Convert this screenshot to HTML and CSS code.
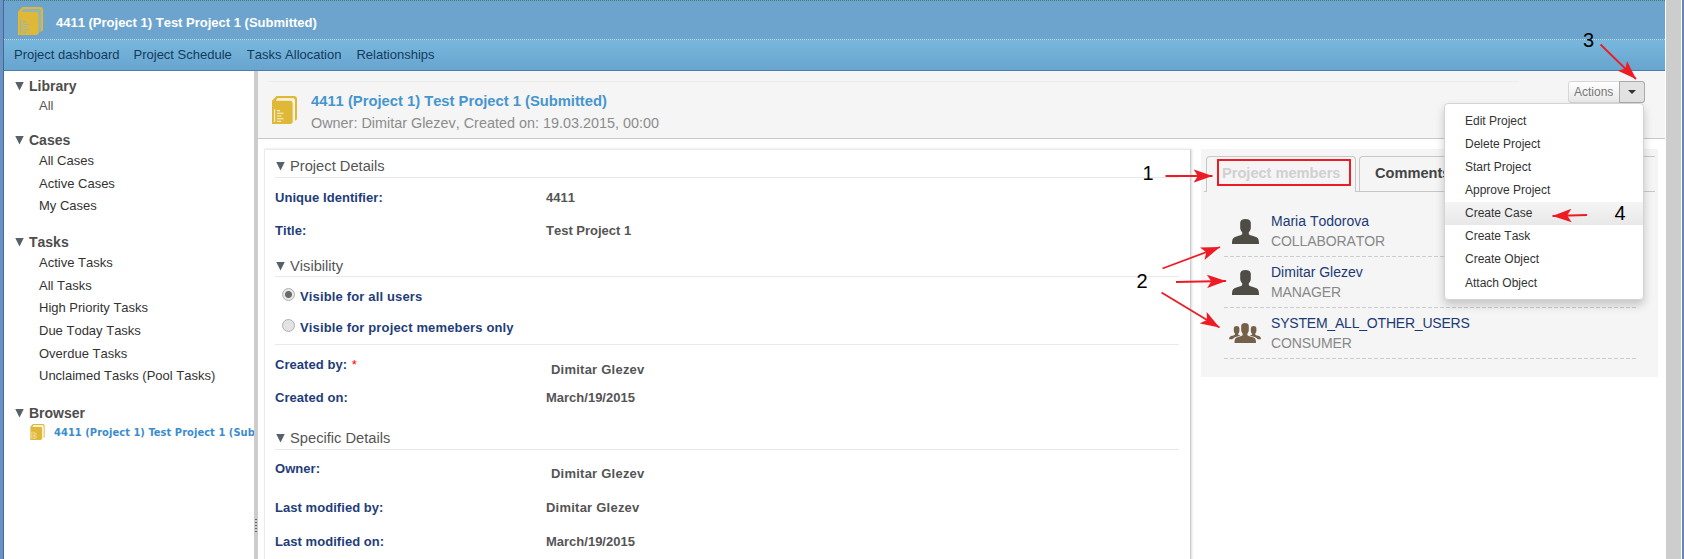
FILE: index.html
```html
<!DOCTYPE html>
<html lang="en">
<head>
<meta charset="utf-8">
<title>4411 (Project 1) Test Project 1 (Submitted)</title>
<link rel="stylesheet" href="styles.css">
</head>
<body>
<svg class="defs" width="0" height="0">
  <symbol id="book" viewBox="0 0 25 28">
    <path fill="#e0b838" d="M0 4.800 L4.400 0 H22 Q25 0 25 3 V22.500 Q25 24.400 23 24.800 V4.800 Q23 2.300 20.500 2.300 H5.800 L4 4.600 H17.800 Q20.800 4.600 20.800 7.600 V25 Q20.800 28 17.800 28 H0 Z"/>
    <path fill="currentColor" d="M4 4.600 L5.800 2.300 H20.500 Q23 2.300 23 4.800 V24.800 H20.800 V7.600 Q20.800 4.600 17.800 4.600 Z"/>
    <path stroke="currentColor" fill="none" stroke-width="1.1" d="M2.600 13V26M5 14.600H8M5 17.300H11.500M5 20H9.500M5 22.700H11.500M5 25.200H9"/>
  </symbol>
  <symbol id="person" viewBox="0 0 27 25">
    <path fill="#4f4c46" d="M8.200 3.500 C8.600 1 10.500 0 13.500 0 C16.500 0 18.400 1 18.800 3.500 V9.200 C18.600 11 17.800 12.200 16.800 13.200 V15.200 C18.500 16.600 22 17 24.600 18.200 C26.500 19.200 27 21 27 25 H0 C0 21 .5 19.200 2.400 18.200 C5 17 8.500 16.600 10.200 15.200 V13.200 C9.200 12.200 8.400 11 8.200 9.200 Z"/>
  </symbol>
  <symbol id="group" viewBox="0 0 32 20">
    <g fill="#75614a">
      <path d="M12.200 2.800 C12.400 .8 13.800 0 16 0 C18.200 0 19.600 .8 19.800 2.800 V7 C19.700 8.600 19.200 9.700 18.400 10.500 V12.200 C19.800 13.400 22.600 13.700 24.600 14.600 C26.500 15.500 27 16.800 27 20 H5.500 C5.500 16.800 6 15.500 7.600 14.600 C9.600 13.700 12.200 13.400 13.600 12.200 V10.500 C12.800 9.700 12.300 8.600 12.200 7 Z"/>
      <path d="M4.800 5 Q5 3 7.500 3 Q10.200 3 10.400 5 V8 Q10.300 9.700 9.300 10.600 V11.800 L11.500 12.800 Q6.500 13.600 5 14.800 L3.400 16.300 H0 Q0 13.800 2 13 Q5 12.500 6 11.500 V10.600 Q4.900 9.700 4.800 8 Z"/>
      <path d="M27.400 5 Q27.200 3 24.700 3 Q22 3 21.800 5 V8 Q21.900 9.700 22.900 10.600 V11.800 L20.700 12.800 Q25.700 13.600 27.200 14.800 L28.800 16.300 H32 Q32 13.800 30.200 13 Q27.200 12.500 26.200 11.500 V10.600 Q27.300 9.700 27.400 8 Z"/>
    </g>
  </symbol>
</svg>

<div class="window">
  <div class="app">
    <header class="topbar">
      <svg class="book book-top"><use href="#book"/></svg>
      <span>4411 (Project 1) Test Project 1 (Submitted)</span>
    </header>
    <nav class="nav">
      <a>Project dashboard</a><a>Project Schedule</a><a>Tasks Allocation</a><a>Relationships</a>
    </nav>
    <div class="body">
      <aside class="sidebar">
        <section class="group library">
          <h3><i class="tri"></i>Library</h3>
          <ul><li>All</li></ul>
        </section>
        <section class="group cases">
          <h3><i class="tri"></i>Cases</h3>
          <ul><li>All Cases</li><li>Active Cases</li><li>My Cases</li></ul>
        </section>
        <section class="group tasks">
          <h3><i class="tri"></i>Tasks</h3>
          <ul><li>Active Tasks</li><li>All Tasks</li><li>High Priority Tasks</li><li>Due Today Tasks</li><li>Overdue Tasks</li><li>Unclaimed Tasks (Pool Tasks)</li></ul>
        </section>
        <section class="group">
          <h3><i class="tri"></i>Browser</h3>
          <div class="tree"><svg class="book book-small"><use href="#book"/></svg><span>4411 (Project 1) Test Project 1 (Sub</span></div>
        </section>
      </aside>
      <div class="splitter"><i></i></div>
      <main class="main">
        <header class="head">
          <svg class="book"><use href="#book"/></svg>
          <div class="head-text">
            <h1>4411 (Project 1) Test Project 1 (Submitted)</h1>
            <p>Owner: Dimitar Glezev, Created on: 19.03.2015, 00:00</p>
          </div>
          <div class="actions">
            <div class="split-button"><span>Actions</span><b><i></i></b></div>
            <ul class="menu">
              <li>Edit Project</li><li>Delete Project</li><li>Start Project</li><li>Approve Project</li>
              <li class="active">Create Case</li><li>Create Task</li><li>Create Object</li><li>Attach Object</li>
            </ul>
          </div>
        </header>
        <div class="columns">
          <div class="card">
            <h2><i class="tri"></i>Project Details</h2>
            <dl class="row r33 first"><dt>Unique Identifier:</dt><dd>4411</dd></dl>
            <dl class="row r33"><dt>Title:</dt><dd>Test Project 1</dd></dl>
            <h2 class="visibility"><i class="tri"></i>Visibility</h2>
            <div class="options">
              <label><i class="radio on"></i>Visible for all users</label>
              <label><i class="radio"></i>Visible for project memebers only</label>
            </div>
            <dl class="row r33 created"><dt>Created by: <em>*</em></dt><dd class="name picked">Dimitar Glezev</dd></dl>
            <dl class="row r33"><dt>Created on:</dt><dd>March/19/2015</dd></dl>
            <h2 class="specific"><i class="tri"></i>Specific Details</h2>
            <dl class="row r39"><dt>Owner:</dt><dd class="name picked">Dimitar Glezev</dd></dl>
            <dl class="row r34"><dt>Last modified by:</dt><dd class="name">Dimitar Glezev</dd></dl>
            <dl class="row r34"><dt>Last modified on:</dt><dd>March/19/2015</dd></dl>
          </div>
          <div class="panel">
            <div class="tabs">
              <div class="tab current"><span>Project members</span></div>
              <div class="tab other">Comments</div>
            </div>
            <ul class="members">
              <li><svg class="person"><use href="#person"/></svg><div><b>Maria Todorova</b><span>COLLABORATOR</span></div></li>
              <li><svg class="person"><use href="#person"/></svg><div><b>Dimitar Glezev</b><span>MANAGER</span></div></li>
              <li><svg class="people"><use href="#group"/></svg><div><b class="system">SYSTEM_ALL_OTHER_USERS</b><span>CONSUMER</span></div></li>
            </ul>
          </div>
        </div>
      </main>
    </div>
  </div>
  <div class="scroll"></div>
</div>

<svg class="notes" width="1684" height="559" viewBox="0 0 1684 559">
  <defs>
    <marker id="arrow" markerUnits="userSpaceOnUse" markerWidth="20" markerHeight="14" refX="19" refY="7" orient="auto">
      <path d="M0 .3 L19 7 L0 13.700 L4.300 7 Z" fill="#ed1c24"/>
    </marker>
  </defs>
  <g stroke="#ed1c24" stroke-width="1.8" fill="none">
    <path d="M1165.500 176H1212.500" marker-end="url(#arrow)"/>
    <path d="M1162.500 268.500L1220 247" marker-end="url(#arrow)"/>
    <path d="M1176 282L1226 281" marker-end="url(#arrow)"/>
    <path d="M1161.500 292.500L1219.500 327.500" marker-end="url(#arrow)"/>
    <path d="M1600.500 44.500L1636 79" marker-end="url(#arrow)"/>
    <path d="M1587 215L1552.500 216" marker-end="url(#arrow)"/>
  </g>
  <g class="numbers">
    <text x="1142.500" y="180">1</text>
    <text x="1136.500" y="288">2</text>
    <text x="1583" y="46.500">3</text>
    <text x="1614.500" y="220">4</text>
  </g>
</svg>
</body>
</html>
```
FILE: styles.css
```css
* { box-sizing: border-box; }
body, h1, h2, h3, p, ul, dl, dd { margin: 0; padding: 0; }
ul { list-style: none; }
body {
  width: 1684px; height: 559px; overflow: hidden; background: #fff;
  font: 13px "Liberation Sans", Arial, sans-serif; font-kerning: none;
  color: #333; white-space: nowrap;
}
.defs { position: absolute; }
.window {
  display: flex; height: 559px;
  border-left: 3px solid #6a93c4; border-right: 2px solid #6288b6;
}
.app {
  width: 1662px; flex: none; display: flex; flex-direction: column;
  border-left: 1px solid #3f6b9a;
}
.scroll { flex: 1; margin: 0 1px; background: #cdcdcd; }

/* Title bar and navigation */
.topbar {
  height: 40px; flex: none; display: flex; align-items: center; padding-left: 14px;
  background: #6da4ce; border-top: 1px dotted #3f8468; border-bottom: 1px dotted #c3ddf0;
  color: #fff; font-weight: bold;
}
.topbar span { padding: 5px 0 0 13px; }
.nav {
  height: 31px; flex: none; display: flex; gap: 15px; padding-left: 10px; line-height: 29px;
  background: linear-gradient(#77b7dd, #69a5cf); border-bottom: 1px solid #4680ae; color: #123b5c;
}
.nav a:first-child { margin-right: -1px; }
.book { width: 25px; height: 28px; flex: none; color: #f8f1dc; }
.book-top { color: #8fb4c4; margin-top: 2px; }

.body { flex: 1; display: flex; min-height: 0; }

/* Sidebar */
.sidebar { width: 250px; flex: none; padding: 5px 0 0 11px; overflow: hidden; }
h3 { display: flex; align-items: center; font-size: 14px; line-height: 20px; color: #4d4d4d; }
.tri {
  width: 9px; height: 9px; margin-right: 5px; flex: none;
  background: #56616c; clip-path: polygon(0 0, 100% 0, 50% 100%);
}
.group li { padding-left: 24px; line-height: 22.67px; height: 22.67px; }
.library { height: 54px; }
.library ul { margin-top: -1px; color: #555; }
.cases { height: 102px; }
.tasks { height: 171px; }
.tree { display: flex; align-items: center; height: 18px; padding-left: 15px; }
.tree span {
  margin-left: 9px; font: bold 11px "DejaVu Sans Condensed", "DejaVu Sans", sans-serif;
  font-stretch: condensed; color: #3b8ccd; letter-spacing: .06px;
}
.book-small { width: 15px; height: 16px; }
.splitter { width: 4px; flex: none; background: #ccc; padding: 448px 0 0 1px; }
.splitter i { display: block; width: 2px; height: 14px; background: repeating-linear-gradient(#666 0 1px, #ccc 1px 3px); }

/* Record header */
.main { flex: 1; min-width: 0; }
.head {
  position: relative; height: 68px; display: flex; padding: 25px 20px 0 14px;
  background: #f5f5f5; border-bottom: 1px solid #c8c8c8;
}
.head::before { content: ""; position: absolute; left: 10px; right: 146px; top: 10px; height: 1px; background: #ededed; }
.head-text { flex: 1; padding-left: 14px; margin-top: -6px; }
h1 { font-size: 14.75px; line-height: 22px; color: #4695ce; }
.head p { font-size: 14.4px; line-height: 22px; color: #8c8c8c; }
.actions { position: relative; margin-top: -15px; }
.split-button {
  display: flex; width: 77px; height: 22px; border: 1px solid #d6d6d6; border-radius: 3px;
  background: linear-gradient(#fff, #e8e8e8); font-size: 12px; line-height: 20px; color: #777;
}
.split-button span { width: 51px; padding-left: 5px; }
.split-button b {
  width: 26px; margin: -1px; padding: 8px 0 0 8px; background: #e2e2e2;
  border: 1px solid #aaa; border-radius: 0 3px 3px 0;
}
.split-button b i { display: block; width: 8px; height: 4px; background: #333; clip-path: polygon(0 0, 100% 0, 50% 100%); }
.menu {
  position: absolute; z-index: 2; right: 1px; top: 22px; width: 200px; padding: 6px 0 5px;
  background: #fff; border: 1px solid #d4d4d4; border-radius: 4px;
  box-shadow: 0 5px 10px rgba(0,0,0,.2); font-size: 12px;
}
.menu li { height: 23px; line-height: 23px; padding-left: 20px; }
.menu li:last-child { padding-top: 1px; }
.menu .active { background: linear-gradient(#f5f5f5, #e8e8e8); }

/* Details card */
.columns { display: flex; align-items: flex-start; gap: 10px; padding: 10px 0 0 6px; }
.card {
  width: 927px; height: 430px; flex: none; padding: 4px 11px 0 10px; border: 1px solid #eaeaea;
  border-right: 1px solid #cdcdcd; box-shadow: 1px 0 2px rgba(0,0,0,.15);
}
h2 {
  display: flex; align-items: center; height: 24px; padding: 2px 0 1px 1px; border-bottom: 1px solid #e9e9e9;
  font-weight: normal; font-size: 14.7px; color: #555;
}
.row { display: flex; font-weight: bold; line-height: 15px; color: #555; }
.row dt { width: 271px; color: #1f3d7a; letter-spacing: .05px; }
.r33 { height: 33px; }
.r34 { height: 34px; }
.r39 { height: 39px; }
.first { margin-top: 12px; }
.visibility { margin-top: -3px; padding-top: 4px; }
.name { letter-spacing: .23px; }
.picked { padding: 5px 0 0 5px; }
em { font-style: normal; font-weight: normal; color: red; padding-left: 1px; }
.options { height: 68px; padding: 12px 0 0 7px; border-bottom: 1px solid #e9e9e9; }
.options label { display: flex; height: 31px; line-height: 15px; font-weight: bold; color: #1f3d7a; letter-spacing: .15px; }
.radio { width: 13px; height: 13px; margin: -1px 5px 0 0; border: 1px solid #b0b0b0; border-radius: 50%; background: #e3e3e3; }
.on { background: radial-gradient(circle, #6a6a6a 3px, #e8e8e8 4px); }
.created { margin-top: 12px; }
.specific { margin-top: 3px; margin-bottom: 11px; }

/* Members panel */
.panel { width: 457px; height: 228px; background: #f5f5f5; padding: 7px 3px 0; }
.tabs { display: flex; height: 36px; font-size: 14.6px; font-weight: bold; color: #444; }
.tabs::before { content: ""; width: 2px; border-bottom: 1px solid #c8c8c8; }
.tab { border: 1px solid #c8c8c8; border-bottom: 0; border-radius: 4px 4px 0 0; line-height: 33px; }
.current { width: 150px; padding: 2px 0 0 10px; line-height: 0; }
.current span { display: block; width: 134px; height: 27px; padding-left: 3px; line-height: 25px; border: 2px solid #ed1c24; color: #d0d0d0; }
.tabs::after { content: ""; order: 1; width: 3px; border-bottom: 1px solid #c8c8c8; }
.other { order: 2; flex: 1; padding-left: 15px; border-right: 0; border-bottom: 1px solid #c8c8c8; border-radius: 4px 0 0 0; }
.members { padding: 14px 19px 0 20px; }
.members li {
  height: 51px; display: flex; align-items: flex-start;
  background: repeating-linear-gradient(90deg, #ccc 0 4px, transparent 4px 6px) bottom / 100% 1px no-repeat;
}
.members div { display: flex; flex-direction: column; padding-top: 5px; font-size: 14px; line-height: 20px; color: #888; }
.members b { font-weight: normal; color: #1b3a75; }
.members .system { letter-spacing: -.2px; }
.members span { letter-spacing: -.1px; }
.person { width: 27px; height: 25px; margin: 13px 12px 0 8px; }
.people { width: 32px; height: 20px; margin: 15px 10px 0 5px; }

/* Callouts drawn above the page */
.notes { position: absolute; left: 0; top: 0; z-index: 5; }
.numbers { font-size: 20px; fill: #000; }
```
